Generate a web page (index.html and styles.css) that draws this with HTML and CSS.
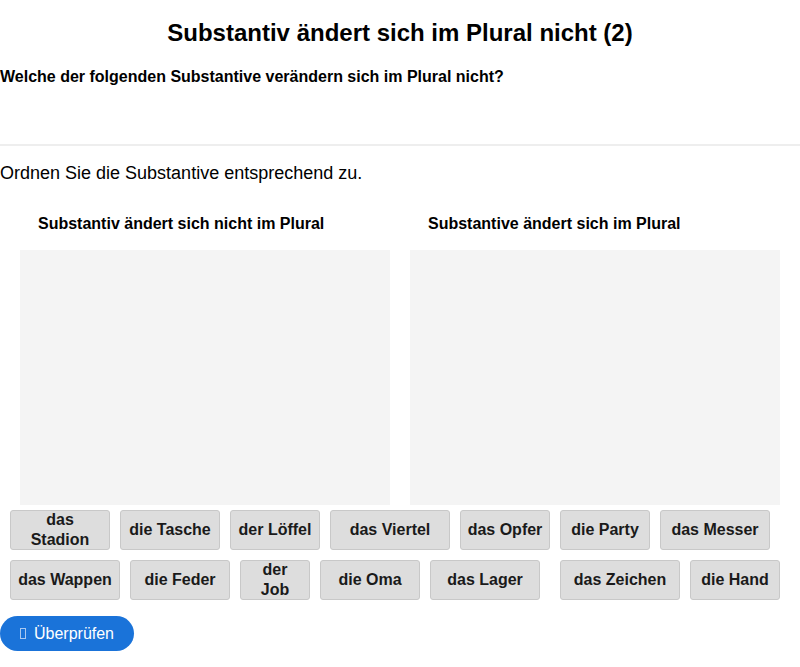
FILE: index.html
```html
<!DOCTYPE html>
<html lang="de">
<head>
    <meta charset="UTF-8">
    <meta name="viewport" content="width=device-width, initial-scale=1.0">
    <title>Substantiv ändert sich im Plural nicht (2)</title>
    <link rel="stylesheet" href="styles.css">
</head>
<body>
    <div class="header">
        <h1 class="title">Substantiv ändert sich im Plural nicht (2)</h1>
        <p class="question">Welche der folgenden Substantive verändern sich im Plural nicht?</p>
    </div>
    <p class="task">Ordnen Sie die Substantive entsprechend zu.</p>
    <div class="columns">
        <div class="column">
            <div class="column-title">Substantiv ändert sich nicht im Plural</div>
            <div class="dropzone"></div>
        </div>
        <div class="column">
            <div class="column-title">Substantive ändert sich im Plural</div>
            <div class="dropzone"></div>
        </div>
    </div>
    <div class="tiles">
        <div class="tile w100">das Stadion</div>
        <div class="tile w100">die Tasche</div>
        <div class="tile w90">der Löffel</div>
        <div class="tile w120">das Viertel</div>
        <div class="tile w90">das Opfer</div>
        <div class="tile w90">die Party</div>
        <div class="tile w110">das Messer</div>
        <div class="tile w110">das Wappen</div>
        <div class="tile w100">die Feder</div>
        <div class="tile w70">der Job</div>
        <div class="tile w100">die Oma</div>
        <div class="tile w110">das Lager</div>
        <div class="tile w120 push">das Zeichen</div>
        <div class="tile w90">die Hand</div>
    </div>
    <button class="check"><span class="icon"></span>Überprüfen</button>
</body>
</html>
```

FILE: styles.css
```css
body {
    margin: 0;
    font-family: 'Liberation Sans', Arial, sans-serif;
    color: #000;
    background: #fff;
}
.header {
    padding: 19px 0 57px;
    border-bottom: 2px solid #eeeeee;
}
.title {
    margin: 0;
    font-size: 24px;
    line-height: 28px;
    text-align: center;
}
.question {
    margin: 20px 0 0;
    font-size: 16px;
    line-height: 20px;
    font-weight: bold;
}
.task {
    margin: 16px 0 0;
    font-size: 18px;
    line-height: 22px;
}
.columns {
    display: flex;
    gap: 20px;
    padding: 0 20px;
    margin-top: 30px;
}
.column {
    width: 370px;
}
.column-title {
    padding-left: 18px;
    font-size: 16px;
    line-height: 20px;
    font-weight: bold;
}
.dropzone {
    margin-top: 16px;
    height: 255px;
    background: #f4f4f4;
}
.tiles {
    display: flex;
    flex-wrap: wrap;
    gap: 10px;
    width: 780px;
    padding-left: 10px;
    margin-top: 5px;
}
.tile {
    box-sizing: border-box;
    height: 40px;
    padding: 0 6px;
    display: flex;
    align-items: center;
    justify-content: center;
    text-align: center;
    background: #dddddd;
    border: 1px solid #c8c8c8;
    border-radius: 3px;
    font-size: 16px;
    line-height: 20px;
    font-weight: bold;
    color: #1a1a1a;
}
.w70 { width: 70px; }
.w90 { width: 90px; }
.w100 { width: 100px; }
.w110 { width: 110px; }
.w120 { width: 120px; }
.push { margin-left: 10px; }
.check {
    margin-top: 16px;
    height: 35px;
    width: 134px;
    padding: 0;
    border: 0;
    border-radius: 18px;
    background: #1a73d9;
    color: #fff;
    font-family: 'Liberation Sans', Arial, sans-serif;
    font-size: 16px;
    display: flex;
    align-items: center;
    justify-content: center;
}
.icon {
    box-sizing: border-box;
    width: 6px;
    height: 11px;
    border: 1px solid #a9c8f0;
    margin-right: 8px;
}
```
